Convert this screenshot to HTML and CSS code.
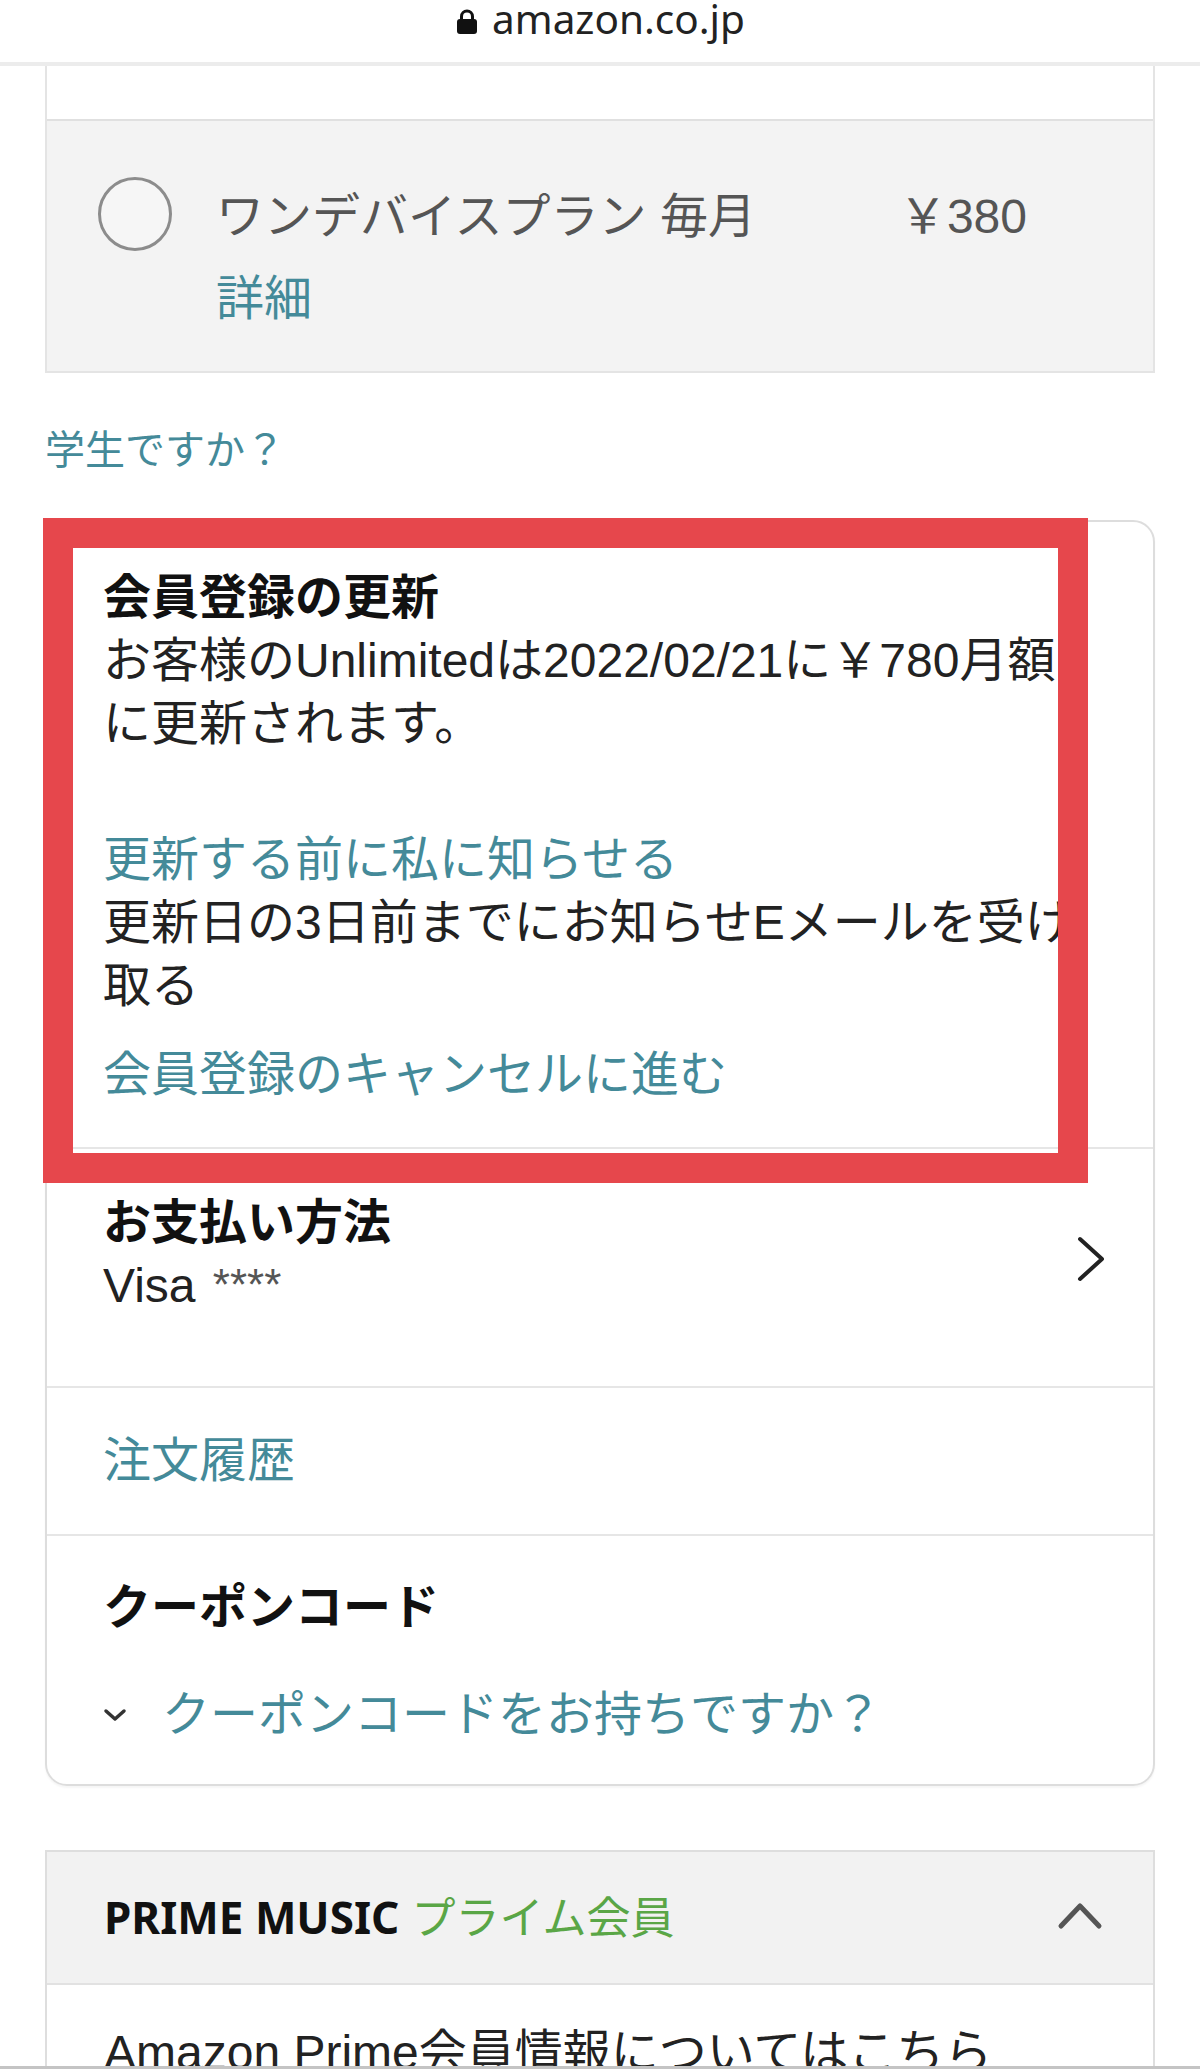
FILE: index.html
```html
<!DOCTYPE html>
<html lang="ja">
<head>
<meta charset="utf-8">
<title>amazon.co.jp</title>
<link rel="stylesheet" href="styles.css">
</head>
<body>
<div class="screen">
  <header class="urlbar">
    <svg class="lock" viewBox="0 0 24 26" aria-hidden="true">
      <path d="M6.5 12V8.5a5.5 5.5 0 0 1 11 0V12" fill="none" stroke="#111" stroke-width="3"/>
      <rect x="2" y="11" width="20" height="15" rx="3" fill="#111"/>
    </svg>
    <span class="host">amazon.co.jp</span>
  </header>

  <main class="page">
    <div class="plans">
      <div class="plan-gap"></div>
      <div class="plan-option">
        <span class="radio"></span>
        <div class="plan-body">
          <div class="plan-row">
            <span class="plan-name">ワンデバイスプラン 毎月</span>
            <span class="plan-price">￥380</span>
          </div>
          <a class="link plan-detail" href="#">詳細</a>
        </div>
      </div>
    </div>

    <a class="link student" href="#">学生ですか？</a>

    <section class="card">
      <div class="item renewal">
        <h3 class="item-title">会員登録の更新</h3>
        <p class="text">お客様のUnlimitedは2022/02/21に￥780月額に更新されます。</p>
        <a class="link notify" href="#">更新する前に私に知らせる</a>
        <p class="text">更新日の3日前までにお知らせEメールを受け取る</p>
        <a class="link cancel" href="#">会員登録のキャンセルに進む</a>
      </div>

      <div class="item payment">
        <div>
          <h3 class="item-title">お支払い方法</h3>
          <div class="text">Visa <span class="mask">****</span></div>
        </div>
        <svg class="chev-right" viewBox="0 0 28 46" aria-hidden="true">
          <polyline points="3,3 25,23 3,43" fill="none" stroke="#222" stroke-width="4" stroke-linecap="round" stroke-linejoin="round"/>
        </svg>
      </div>

      <div class="item orders">
        <a class="link" href="#">注文履歴</a>
      </div>

      <div class="item coupon">
        <h3 class="item-title">クーポンコード</h3>
        <div class="coupon-toggle">
          <svg class="chev-down" viewBox="0 0 24 14" aria-hidden="true">
            <polyline points="3,3 12,11 21,3" fill="none" stroke="#333" stroke-width="3.5" stroke-linecap="round" stroke-linejoin="round"/>
          </svg>
          <a class="link" href="#">クーポンコードをお持ちですか？</a>
        </div>
      </div>

      <div class="highlight"></div>
    </section>

    <section class="accordion">
      <div class="acc-head">
        <div class="acc-title"><b class="brand">PRIME MUSIC</b> <span class="prime">プライム会員</span></div>
        <svg class="caret-up" viewBox="0 0 46 30" aria-hidden="true">
          <polyline points="4,26 23,6 42,26" fill="none" stroke="#555" stroke-width="5" stroke-linecap="round" stroke-linejoin="round"/>
        </svg>
      </div>
      <div class="acc-body">
        <div class="text">Amazon Prime会員情報についてはこちら</div>
      </div>
    </section>
  </main>

  <div class="toolbar-edge"></div>
</div>
</body>
</html>
```

FILE: styles.css
```css
* {
  box-sizing: border-box;
}

html,
body {
  margin: 0;
  padding: 0;
  background: #fff;
}

body {
  font-family: "Liberation Sans", "Noto Sans CJK JP", sans-serif;
  font-size: 48px;
  line-height: 63px;
  color: #222;
}

.screen {
  position: relative;
  width: 1200px;
  height: 2069px;
  overflow: hidden;
  background: #fff;
}

/* address bar */
.urlbar {
  height: 66px;
  border-bottom: 4px solid #ececec;
  display: flex;
  justify-content: center;
  align-items: flex-start;
  gap: 13px;
}

.lock {
  width: 24px;
  height: 26px;
  margin-top: 8px;
}

.host {
  font-family: "Noto Sans", sans-serif;
  font-size: 40.5px;
  line-height: 38px;
  color: #222;
}

.page {
  padding: 0 45px;
}

/* plan picker */
.plans {
  border: 2px solid #e4e4e4;
  border-top: 0;
}

.plan-gap {
  height: 53px;
}

.plan-option {
  display: flex;
  align-items: flex-start;
  background: #f3f3f3;
  border-top: 2px solid #e0e0e0;
  padding: 64px 126px 40px 51px;
}

.radio {
  flex: none;
  width: 74px;
  height: 74px;
  margin: -8px 44px 0 0;
  border: 3px solid #8c8c8c;
  border-radius: 50%;
  background: #f6f6f6;
}

.plan-body {
  flex: 1;
}

.plan-row {
  display: flex;
  justify-content: space-between;
  color: #555;
  line-height: 64px;
}

.plan-detail {
  display: block;
  margin-top: 18px;
  line-height: 64px;
}

.link {
  color: #448a99;
  text-decoration: none;
}

.student {
  display: block;
  margin-top: 47px;
  font-size: 40px;
  line-height: 61px;
}

/* membership card */
.card {
  position: relative;
  margin-top: 39px;
  border: 2px solid #dddddd;
  border-radius: 22px;
  box-shadow: 0 2px 2px rgba(0, 0, 0, 0.04);
}

.item {
  padding: 0 48px 0 56px;
}

.item + .item {
  border-top: 2px solid #e6e6e6;
}

.item-title {
  margin: 0;
  font-size: 48px;
  font-weight: 700;
  line-height: 63px;
  color: #111;
}

.text {
  margin: 0;
  color: #222;
}

.renewal {
  padding: 44px 72px 41px 56px;
}

.notify {
  display: block;
  margin-top: 73px;
}

.cancel {
  display: block;
  margin-top: 26px;
}

.payment {
  display: flex;
  align-items: center;
  justify-content: space-between;
  padding-top: 42px;
  padding-bottom: 69px;
}

.mask {
  margin-left: 4px;
  font-size: 44px;
  line-height: 0;
  color: #555;
  vertical-align: 2px;
}

.chev-right {
  width: 28px;
  height: 46px;
  margin-top: 10px;
}

.orders {
  padding-top: 41px;
  padding-bottom: 42px;
}

.coupon {
  padding-top: 40px;
  padding-bottom: 38px;
}

.coupon-toggle {
  display: flex;
  align-items: center;
  margin-top: 44px;
}

.chev-down {
  width: 24px;
  height: 14px;
  margin-right: 35px;
}

/* red marker frame drawn over the renewal block */
.highlight {
  position: absolute;
  top: -4px;
  left: -4px;
  width: 1045px;
  height: 665px;
  border: 30px solid #e6474c;
  pointer-events: none;
}

/* PRIME MUSIC accordion */
.accordion {
  margin-top: 64px;
  border: 2px solid #dedede;
  border-bottom: 0;
}

.acc-head {
  height: 133px;
  display: flex;
  align-items: center;
  justify-content: space-between;
  padding: 0 50px 0 57px;
  background: #f2f2f2;
  border-bottom: 2px solid #e2e2e2;
}

.acc-title {
  font-size: 44px;
}

.brand {
  font-family: "Noto Sans", sans-serif;
  font-size: 44px;
  font-weight: 700;
  color: #111;
}

.prime {
  color: #5aa646;
}

.caret-up {
  width: 46px;
  height: 30px;
  margin-top: -5px;
}

.acc-body {
  padding: 36px 57px;
}

.toolbar-edge {
  position: absolute;
  left: 0;
  right: 0;
  bottom: 0;
  height: 3px;
  background: #c4c4c4;
}
```
